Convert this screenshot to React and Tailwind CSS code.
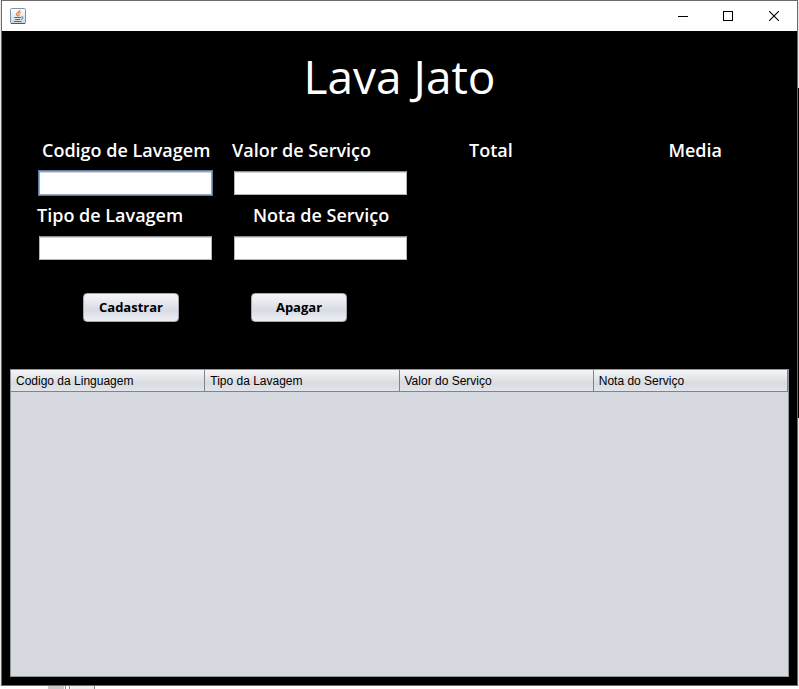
import React from "react";

const columns = ["Codigo da Linguagem", "Tipo da Lavagem", "Valor do Serviço", "Nota do Serviço"];

function JavaIcon() {
  return (
    <svg width="16" height="16" viewBox="0 0 16 16" aria-hidden="true">
      <defs>
        <linearGradient id="tile" x1="0" y1="0" x2="0" y2="1">
          <stop offset="0" stopColor="#ffffff" />
          <stop offset="1" stopColor="#c9d8e2" />
        </linearGradient>
      </defs>
      <rect x="0.5" y="0.5" width="15" height="15" rx="1" fill="url(#tile)" stroke="#7d95a5" />
      <path d="M1 15.5h14" stroke="#3f5d70" />
      <path d="M9.800 2C10 4 6.200 4.600 6.500 6.400c.1.800.9 1.100 1.200 1.800" fill="none" stroke="#e8833a" strokeWidth="1.300" />
      <path d="M10.800 4.300C8.500 5.200 8.300 6 9 6.800c.3.500 0 1-.6 1.500" fill="none" stroke="#e8833a" strokeWidth="1.100" />
      <path d="M4.200 9.500h6.800M5.200 11.500h5M4 13.500h7.500" stroke="#4a6f8c" strokeWidth="1" />
      <path d="M11.300 8.900c2.300-.5 2.300 1.800 0 2.400" fill="none" stroke="#4a6f8c" />
    </svg>
  );
}

function TitleBar() {
  return (
    <header className="flex h-[30px] shrink-0 items-center justify-between bg-white pl-2">
      <JavaIcon />
      <div className="flex h-full">
        <button aria-label="Minimize" className="flex w-11 items-center justify-center">
          <svg width="10" height="10" viewBox="0 0 10 10" shapeRendering="crispEdges"><path d="M0 5.500h10" stroke="#000" /></svg>
        </button>
        <button aria-label="Maximize" className="flex w-[46px] items-center justify-center">
          <svg width="10" height="10" viewBox="0 0 10 10"><rect x="0.5" y="0.5" width="9" height="9" fill="none" stroke="#000" /></svg>
        </button>
        <button aria-label="Close" className="flex w-[46px] items-center justify-center">
          <svg width="10" height="10" viewBox="0 0 10 10"><path d="M0 0l10 10M10 0L0 10" stroke="#000" strokeWidth="1.100" /></svg>
        </button>
      </div>
    </header>
  );
}

function Field({ id, label, labelClass, focused }) {
  return (
    <div className="flex flex-col">
      <label htmlFor={id} className={"h-7 text-[18px] leading-7 whitespace-nowrap " + labelClass}>
        {label}
      </label>
      <div className="px-1 pt-[7px] pb-1.5">
        <input
          id={id}
          type="text"
          className={
            "block h-6 w-full border bg-white px-1.5 text-xs text-black shadow-[inset_0_1px_0_#d2d3d6] outline-1 " +
            (focused
              ? "border-[#93a9c2] outline-[#5c7c9c]"
              : "border-[#b4b5b8] border-t-[#8e8f93] outline-transparent")
          }
        />
      </div>
    </div>
  );
}

function ActionButton({ children }) {
  return (
    <button className="h-[29px] w-24 rounded border border-[#a5a8b0] bg-linear-to-b from-[#f6f7f9] via-[#d8dbe3] via-60% to-[#eceff4] text-[13px] font-bold text-black">
      {children}
    </button>
  );
}

export default function App() {
  return (
    <div className="flex h-screen flex-col bg-white font-['Noto_Sans','Open_Sans',sans-serif]">
      <div className="flex min-h-0 flex-1">
        <div className="w-px shrink-0 bg-[#e8e8e8]" />
        <div className="flex min-w-0 flex-1 flex-col border border-[#6b6b6b] bg-black">
          <TitleBar />
          <main className="flex min-h-0 flex-1 flex-col px-2 pb-2 text-white">
            <h1 className="mt-3 text-center font-['Open_Sans','Noto_Sans',sans-serif] text-[46px] leading-[66px] font-normal">
              Lava Jato
            </h1>
            <div className="mt-[27px] flex pl-[25px] font-['Open_Sans','Noto_Sans',sans-serif] font-semibold">
              <form>
                <div className="grid grid-cols-[181px_181px] gap-x-3.5">
                  <Field id="codigo" label="Codigo de Lavagem" labelClass="pl-[7px]" focused />
                  <Field id="valor" label="Valor de Serviço" labelClass="pl-0.5" />
                  <Field id="tipo" label="Tipo de Lavagem" labelClass="pl-0.5" />
                  <Field id="nota" label="Nota de Serviço" labelClass="pl-[23px]" />
                </div>
                <div className="mt-[27px] flex gap-[72px] pl-12">
                  <ActionButton>Cadastrar</ActionButton>
                  <ActionButton>Apagar</ActionButton>
                </div>
              </form>
              <div className="flex flex-1 justify-between pr-[67px] pl-[58px] text-[18px] leading-7">
                <p>Total</p>
                <p>Media</p>
              </div>
            </div>
            <div className="mt-[47px] min-h-0 flex-1 border border-[#92959e] bg-[#d6d9e0] text-black">
              <table className="w-full table-fixed border-separate border-spacing-0 font-['Liberation_Sans',Arial,sans-serif] text-xs">
                <thead>
                  <tr className="h-[22px] bg-linear-to-b from-[#f5f6f8] via-[#d9dbe0] via-60% to-[#e2e6ee]">
                    {columns.map((name) => (
                      <th key={name} className="border-r border-b border-[#7f838e] px-[5px] text-left font-normal">
                        {name}
                      </th>
                    ))}
                  </tr>
                </thead>
              </table>
            </div>
          </main>
        </div>
        <div className="flex w-px shrink-0 flex-col">
          <div className="h-[88px] bg-[#e8e8e8]" />
          <div className="h-[330px] bg-black" />
          <div className="flex-1 bg-[#e8e8e8]" />
        </div>
      </div>
      <div className="flex h-[3px] shrink-0 gap-px bg-white pl-12">
        <div className="w-4 bg-[#cacaca]" />
        <div className="w-[5px] border-x border-[#888888] bg-white" />
        <div className="w-6 border-r border-[#888888] bg-[#f0f0f0]" />
      </div>
    </div>
  );
}
